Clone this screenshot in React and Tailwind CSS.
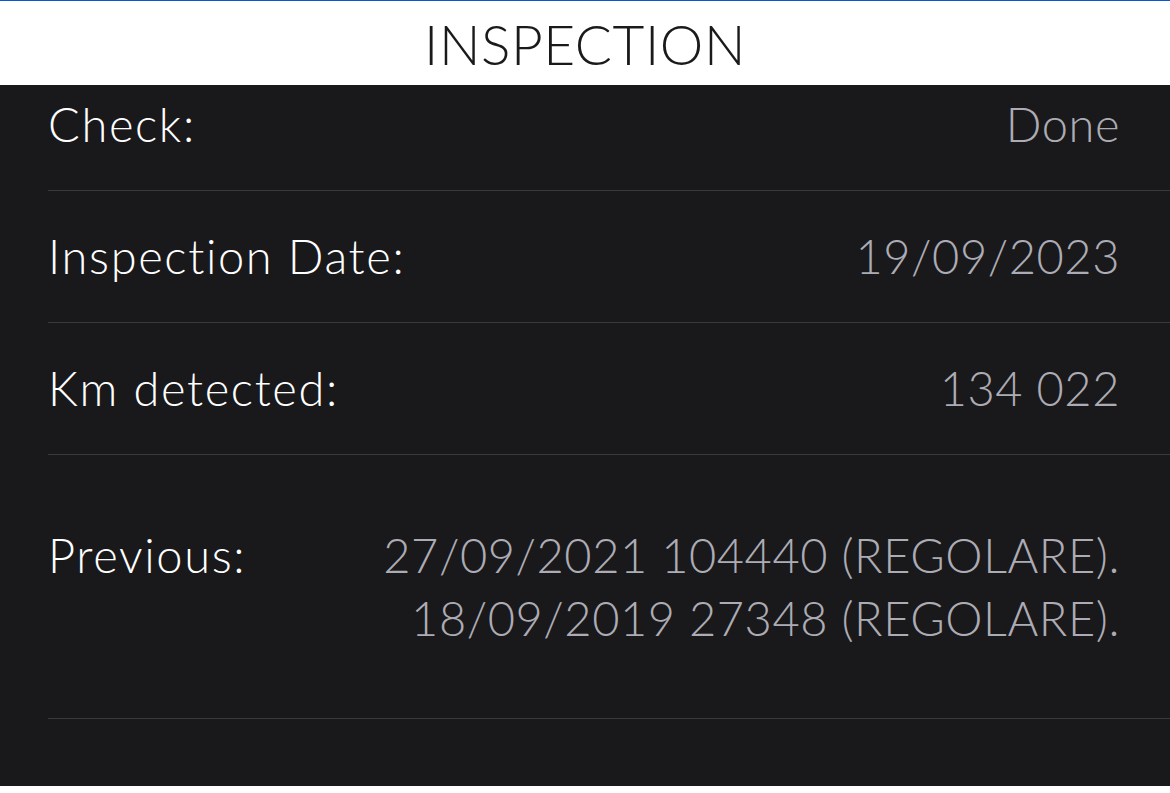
import React from "react";

const rows = [
  { label: "Check:", values: ["Done"] },
  { label: "Inspection Date:", values: ["19/09/2023"] },
  { label: "Km detected:", values: ["134 022"] },
  {
    label: "Previous:",
    values: ["27/09/2021 104440 (REGOLARE).", "18/09/2019 27348 (REGOLARE)."],
  },
];

const font = { fontFamily: "Lato, 'Noto Sans', sans-serif" };

export default function App() {
  return (
    <div className="w-[1170px] h-[793px] bg-white flex flex-col" style={font}>
      {/* title bar */}
      <div className="h-[85px] shrink-0 bg-white border-t border-[#0a58d0] flex items-center justify-center">
        <h1 className="text-[55px] leading-none font-light text-[#1a1a1a] tracking-[0.01em] pt-[3px]">
          INSPECTION
        </h1>
      </div>

      {/* scrolled list */}
      <div className="h-[701px] bg-[#19191b] overflow-hidden">
        <div className="ml-[48px] -mt-[26px]">
          {rows.map((row) => (
            <div
              key={row.label}
              className={`flex justify-between items-center border-b border-[#3a3a3c] pr-[50px] ${
                row.values.length > 1 ? "h-[264px]" : "h-[132px]"
              }`}
            >
              <div className="flex flex-col">
                <span className="text-[47px] leading-[63px] font-light tracking-[0.035em] text-white">
                  {row.label}
                </span>
                {row.values.length > 1 && <span className="h-[63px]" />}
              </div>
              <div className="flex flex-col items-end">
                {row.values.map((v) => (
                  <span
                    key={v}
                    className="text-[47px] leading-[63px] font-light tracking-[0.012em] text-[#adacb5]"
                  >
                    {v}
                  </span>
                ))}
              </div>
            </div>
          ))}
        </div>
      </div>
    </div>
  );
}
